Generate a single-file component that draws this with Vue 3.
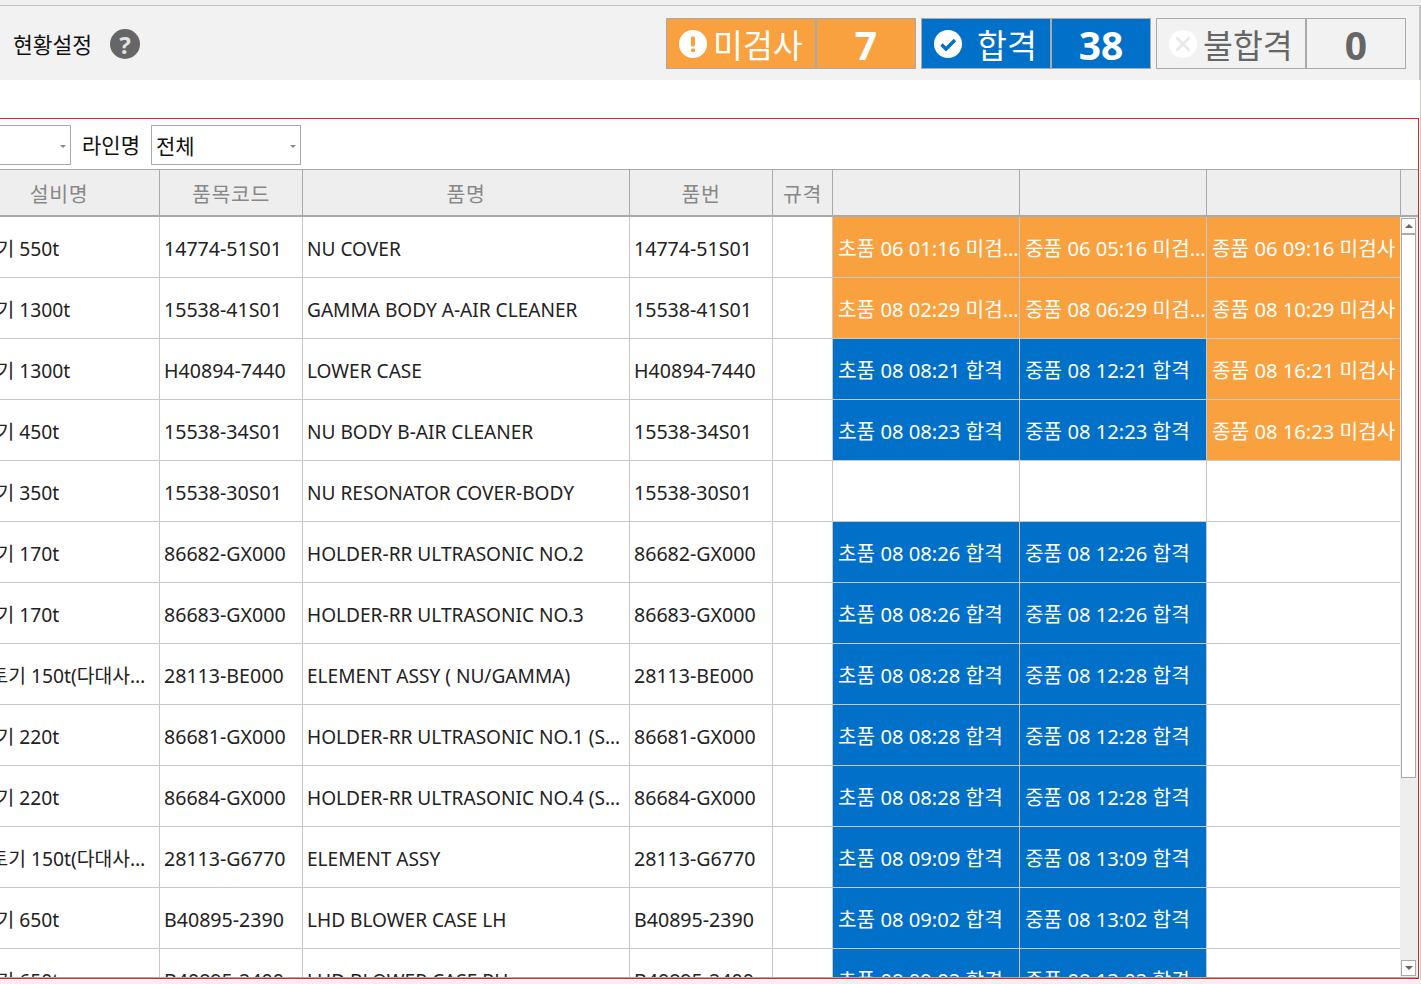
<script setup>
const rows = [
  { eq: '사출기 550t', code: '14774-51S01', name: 'NU COVER', a: ['o', '초품 06 01:16 미검사'], b: ['o', '중품 06 05:16 미검사'], c: ['o', '종품 06 09:16 미검사'] },
  { eq: '사출기 1300t', code: '15538-41S01', name: 'GAMMA BODY A-AIR CLEANER', a: ['o', '초품 08 02:29 미검사'], b: ['o', '중품 08 06:29 미검사'], c: ['o', '종품 08 10:29 미검사'] },
  { eq: '사출기 1300t', code: 'H40894-7440', name: 'LOWER CASE', a: ['b', '초품 08 08:21 합격'], b: ['b', '중품 08 12:21 합격'], c: ['o', '종품 08 16:21 미검사'] },
  { eq: '사출기 450t', code: '15538-34S01', name: 'NU BODY B-AIR CLEANER', a: ['b', '초품 08 08:23 합격'], b: ['b', '중품 08 12:23 합격'], c: ['o', '종품 08 16:23 미검사'] },
  { eq: '사출기 350t', code: '15538-30S01', name: 'NU RESONATOR COVER-BODY' },
  { eq: '사출기 170t', code: '86682-GX000', name: 'HOLDER-RR ULTRASONIC NO.2', a: ['b', '초품 08 08:26 합격'], b: ['b', '중품 08 12:26 합격'] },
  { eq: '사출기 170t', code: '86683-GX000', name: 'HOLDER-RR ULTRASONIC NO.3', a: ['b', '초품 08 08:26 합격'], b: ['b', '중품 08 12:26 합격'] },
  { eq: '사출토기 150t(다대사출기)', long: true, code: '28113-BE000', name: 'ELEMENT ASSY ( NU/GAMMA)', a: ['b', '초품 08 08:28 합격'], b: ['b', '중품 08 12:28 합격'] },
  { eq: '사출기 220t', code: '86681-GX000', name: 'HOLDER-RR ULTRASONIC NO.1 (SET)', a: ['b', '초품 08 08:28 합격'], b: ['b', '중품 08 12:28 합격'] },
  { eq: '사출기 220t', code: '86684-GX000', name: 'HOLDER-RR ULTRASONIC NO.4 (SET)', a: ['b', '초품 08 08:28 합격'], b: ['b', '중품 08 12:28 합격'] },
  { eq: '사출토기 150t(다대사출기)', long: true, code: '28113-G6770', name: 'ELEMENT ASSY', a: ['b', '초품 08 09:09 합격'], b: ['b', '중품 08 13:09 합격'] },
  { eq: '사출기 650t', code: 'B40895-2390', name: 'LHD BLOWER CASE LH', a: ['b', '초품 08 09:02 합격'], b: ['b', '중품 08 13:02 합격'] },
  { eq: '사출기 650t', code: 'B40895-2400', name: 'LHD BLOWER CASE RH', a: ['b', '초품 08 09:02 합격'], b: ['b', '중품 08 13:02 합격'] },
]
</script>

<template>
  <div class="page">
    <div class="topstrip"></div>
    <header class="head">
      <div class="title">현황설정</div>
      <div class="help">?</div>
      <div class="stats">
        <div class="stat orange">
          <div class="lab">
            <svg class="ico" viewBox="0 0 28 28"><circle cx="14" cy="14" r="14" fill="#fff" /><rect x="12" y="6.5" width="4" height="10" rx="1" fill="#f9a13e" /><rect x="12" y="18.5" width="4" height="3.6" rx="1" fill="#f9a13e" /></svg>
            <span>미검사</span>
          </div>
          <div class="num">7</div>
        </div>
        <div class="stat blue">
          <div class="lab">
            <svg class="ico" viewBox="0 0 28 28"><circle cx="14" cy="14" r="14" fill="#fff" /><path d="M7.5 14.5l4.5 4.5 9-9" fill="none" stroke="#0070c8" stroke-width="3.4" /></svg>
            <span>합격</span>
          </div>
          <div class="num">38</div>
        </div>
        <div class="stat plain">
          <div class="lab">
            <svg class="ico" viewBox="0 0 28 28"><circle cx="14" cy="14" r="14" fill="#fff" /><path d="M7.5 7.5l13 13M20.5 7.5l-13 13" stroke="#e8e8e8" stroke-width="2.8" /></svg>
            <span>불합격</span>
          </div>
          <div class="num">0</div>
        </div>
      </div>
    </header>
    <section class="lower">
      <main class="panel">
        <div class="filters">
          <div class="select first"><i class="caret"></i></div>
          <label class="flabel">라인명</label>
          <div class="select"><span>전체</span><i class="caret"></i></div>
        </div>
        <div class="grid">
          <div class="row hrow">
            <div class="c eq">설비명</div>
            <div class="c code">품목코드</div>
            <div class="c name">품명</div>
            <div class="c pn">품번</div>
            <div class="c spec">규격</div>
            <div class="c st"></div>
            <div class="c st"></div>
            <div class="c st last"></div>
            <div class="c sb"></div>
          </div>
          <div class="body">
            <div class="rows">
              <div v-for="(r, i) in rows" :key="i" class="row">
                <div class="c eq"><span class="clip" :class="{ long: r.long }">{{ r.eq }}</span></div>
                <div class="c code">{{ r.code }}</div>
                <div class="c name"><span class="clip">{{ r.name }}</span></div>
                <div class="c pn">{{ r.code }}</div>
                <div class="c spec"></div>
                <div class="c st" :class="r.a && r.a[0]"><span class="clip">{{ r.a && r.a[1] }}</span></div>
                <div class="c st" :class="r.b && r.b[0]"><span class="clip">{{ r.b && r.b[1] }}</span></div>
                <div class="c st last" :class="r.c && r.c[0]"><span class="clip">{{ r.c && r.c[1] }}</span></div>
              </div>
            </div>
            <div class="scroll">
              <div class="sbtn"><i class="up"></i></div>
              <div class="thumb"></div>
              <div class="track"></div>
              <div class="sbtn"><i class="down"></i></div>
            </div>
          </div>
        </div>
      </main>
    </section>
  </div>
</template>

<style scoped>
.page {
  width: 1421px;
  height: 984px;
  overflow: hidden;
  background: #f0f0f0;
  font-family: "Noto Sans", "Noto Sans CJK KR", sans-serif;
  color: #222;
  display: flex;
  flex-direction: column;
}
.topstrip { height: 6px; flex: none; box-sizing: border-box; background: #f0f0f0; border-bottom: 1px solid #c4c4c4; }
.head {
  height: 74px;
  flex: none;
  background: #f2f2f2;
  display: flex;
  align-items: center;
  padding-left: 13px;
  padding-top: 2px;
  border-right: 2px solid #c4c4c4;
  box-sizing: border-box;
  width: 1421px;
}
.title { font-size: 21.5px; color: #111; width: 97px; flex: none; white-space: nowrap; margin-bottom: 2px; }
.help {
  width: 30px; height: 30px; border-radius: 50%;
  background: #666; color: #e4e4e4;
  font-size: 24px; font-weight: 700;
  display: flex; align-items: center; justify-content: center;
}
.stats { margin-left: auto; margin-right: 13px; margin-bottom: 2px; display: flex; gap: 5px; }
.stat {
  display: flex; height: 51px; box-sizing: border-box;
  border: 1px solid #aaa;
}
.lab {
  width: 150px; box-sizing: border-box;
  border-right: 2px solid #aaa;
  display: flex; align-items: center;
  padding-left: 12px; padding-top: 1px; gap: 6px;
  font-size: 32.5px;
}
.blue .lab { width: 130px; gap: 15px; }
.num {
  flex: none; width: 98px; text-align: center;
  font-size: 39px; font-weight: 700;
  line-height: 52px;
}
.ico { width: 28px; height: 28px; flex: none; }
.orange { background: #f9a13e; color: #fff; }
.blue { background: #0070c8; color: #fff; }
.plain { background: #f2f2f2; color: #666; }
.lower {
  height: 900px;
  flex: none;
  box-sizing: border-box;
  background: #fff;
  padding-top: 38px;
  border-right: 1px solid #c8cfc8;
}
.panel {
  height: 861px;
  box-sizing: border-box;
  width: 1419px;
  background: #fff;
  border-top: 1px solid #e0261a;
  border-right: 1px solid #e0261a;
  border-bottom: 1px solid #e0261a;
  overflow: hidden;
}
.filters {
  height: 50px;
  box-sizing: border-box;
  padding-top: 6px;
  display: flex;
  align-items: flex-start;
  margin-left: -150px;
}
.select {
  width: 150px; height: 40px; box-sizing: border-box;
  border: 1px solid #aaa;
  position: relative;
  font-size: 21px;
  line-height: 40px;
  padding-left: 4px;
  color: #111;
  flex: none;
}
.select.first { width: 221px; }
.caret {
  position: absolute; right: 4px; top: 19px;
  width: 0; height: 0;
  border-left: 3px solid transparent;
  border-right: 3px solid transparent;
  border-top: 3px solid #888;
}
.flabel { width: 80px; text-align: center; font-size: 21px; line-height: 41px; color: #111; flex: none; }
.grid { margin-left: -41px; border-top: 1px solid #aaa; border-bottom: 1px solid #aaa; }
.row { display: flex; height: 61px; box-sizing: border-box; border-bottom: 1px solid #c8c8c8; }
.hrow {
  height: 47px; background: #eee; border-bottom: 2px solid #aaa;
  color: #888;
}
.hrow .c { justify-content: center; border-right: 1px solid #aaa; padding: 0; font-size: 20.5px; letter-spacing: 0.6px; }
.c {
  flex: none; box-sizing: border-box;
  display: flex; align-items: center;
  padding-left: 4px;
  padding-top: 2px;
  border-right: 1px solid #c8c8c8;
  font-size: 19.1px;
  white-space: nowrap;
  overflow: hidden;
}
.clip { overflow: hidden; text-overflow: ellipsis; display: block; width: 100%; }
.eq { width: 201px; padding-left: 2px; font-size: 19.3px; }
.eq .clip { width: 193px; }
.eq .clip.long { width: 199px; margin-left: -6px; flex: none; }
.code { width: 143px; font-size: 19.6px; }
.name { width: 327px; padding-right: 4px; padding-top: 4px; }
.pn { width: 143px; font-size: 19.6px; }
.spec { width: 60px; }
.st { width: 187px; font-size: 20.2px; padding: 0 0 0 5px; }
.st.last { width: 194px; border-right: none; }
.hrow .st.last { border-right: 1px solid #aaa; }
.hrow .sb { flex: 1; border-right: none; }
.st.o { background: #f9a13e; color: #fff; }
.st.b { background: #0070c8; color: #fff; }
.body { display: flex; height: 760px; overflow: hidden; }
.rows { width: 1441px; flex: none; }
.scroll {
  width: 18px; flex: none; background: #eee;
  display: flex; flex-direction: column; padding: 1px 2px 1px 1px; box-sizing: border-box;
  height: 760px;
}
.sbtn { height: 16px; flex: none; box-sizing: border-box; background: #fff; border: 1px solid #aaa; display: flex; align-items: center; justify-content: center; }
.thumb { height: 544px; flex: none; box-sizing: border-box; background: #fff; border: 1px solid #aaa; }
.track { flex: 1; }
.up { width: 0; height: 0; border-left: 4px solid transparent; border-right: 4px solid transparent; border-bottom: 4px solid #666; }
.down { width: 0; height: 0; border-left: 4px solid transparent; border-right: 4px solid transparent; border-top: 4px solid #666; }
</style>
